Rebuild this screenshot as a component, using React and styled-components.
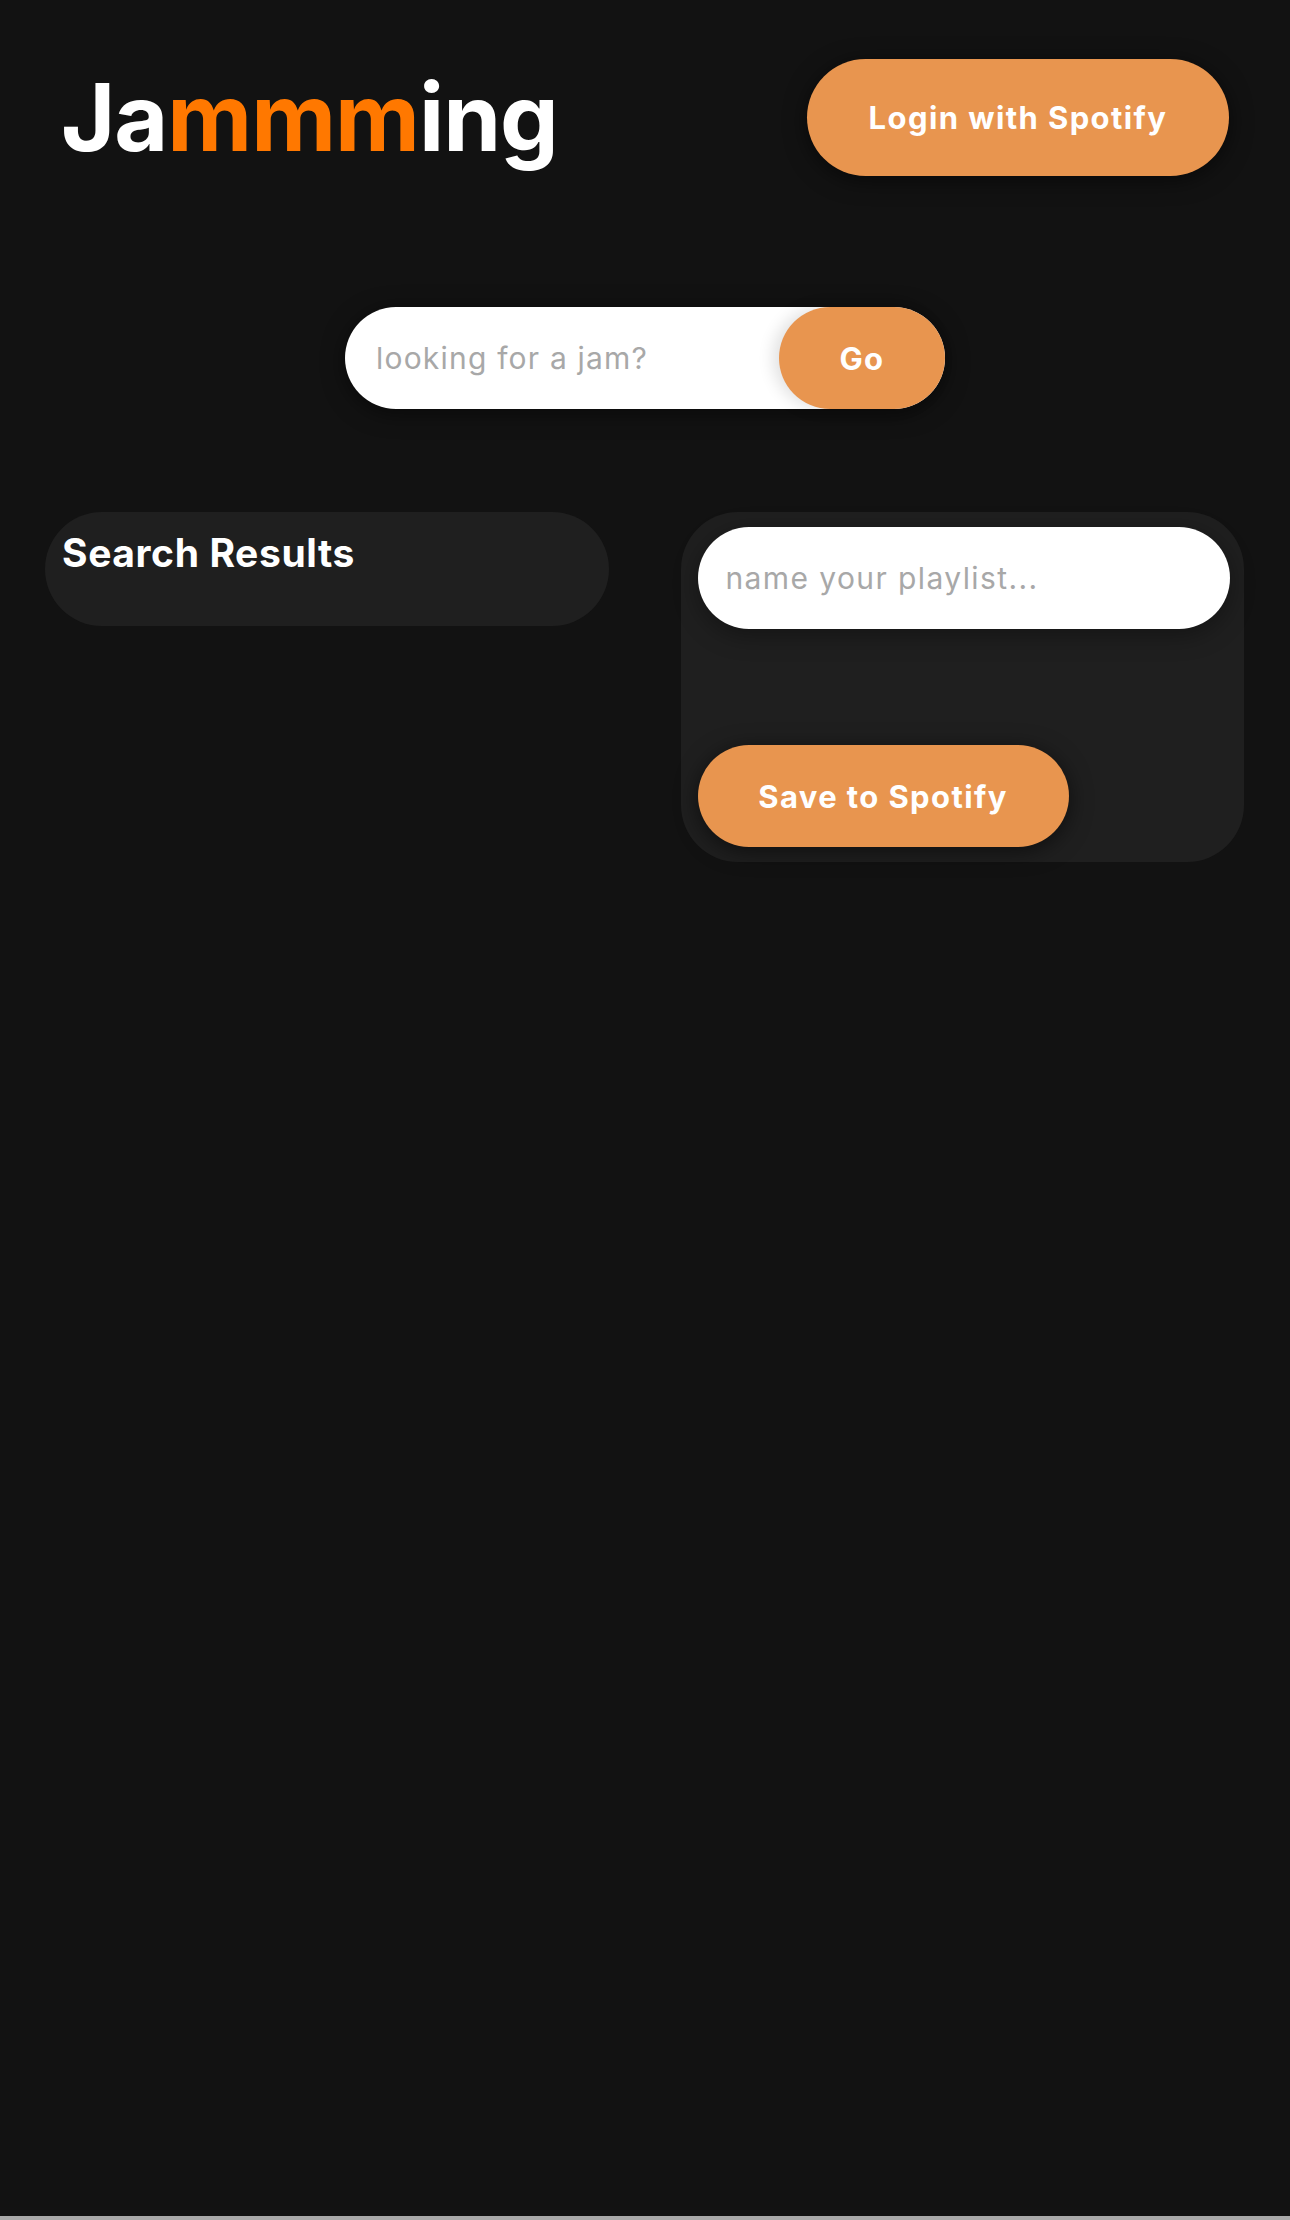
import React from "react";
import styled, { createGlobalStyle } from "styled-components";

const GlobalStyle = createGlobalStyle`
  html, body {
    margin: 0;
    padding: 0;
    background: #121212;
  }
  body {
    font-family: Inter, "Noto Sans", "Liberation Sans", sans-serif;
    color: #ffffff;
  }
  * {
    box-sizing: border-box;
  }
`;

const Page = styled.div`
  display: flex;
  flex-direction: column;
  min-height: 100vh;
  background: #121212;
`;

const Main = styled.main`
  flex: 1;
`;

const BottomStrip = styled.div`
  height: 4px;
  background: #a9a9a9;
`;

const Header = styled.header`
  display: flex;
  justify-content: space-between;
  align-items: center;
  padding: 59px 61px 0 61px;
`;

const Logo = styled.h1`
  margin: 0;
  font-size: 93px;
  font-weight: 700;
  letter-spacing: -1px;
  line-height: 1;
  color: #ffffff;
`;

const Accent = styled.span`
  color: #ff7800;
`;

const PillButton = styled.button`
  border: none;
  border-radius: 999px;
  background: #e8954f;
  color: #ffffff;
  font-family: inherit;
  font-weight: 700;
  font-size: ${({ $size }) => $size || 31}px;
  letter-spacing: 1.4px;
  width: ${({ $width }) => $width}px;
  height: ${({ $height }) => $height || 102}px;
  cursor: pointer;
  box-shadow: 0 4px 22px rgba(0, 0, 0, 0.55);
`;

const SearchRow = styled.div`
  display: flex;
  justify-content: center;
  margin-top: 131px;
`;

const SearchForm = styled.form`
  display: flex;
  width: 600px;
  height: 102px;
  background: #ffffff;
  border-radius: 51px;
  box-shadow: 0 4px 22px rgba(0, 0, 0, 0.5);
`;

const SearchInput = styled.input`
  flex: 1;
  min-width: 0;
  border: none;
  outline: none;
  background: transparent;
  padding-left: 31px;
  font-family: inherit;
  font-size: 30px;
  letter-spacing: 1.2px;
  color: #333;
  border-radius: 51px 0 0 51px;

  &::placeholder {
    color: #a8a8a8;
  }
`;

const GoButton = styled(PillButton)`
  box-shadow: -6px 0 16px rgba(0, 0, 0, 0.12);
`;

const Columns = styled.section`
  display: grid;
  grid-template-columns: 1fr 1fr;
  gap: 72px;
  align-items: start;
  margin-top: 103px;
  padding: 0 46px 0 45px;
`;

const Panel = styled.div`
  background: #1f1f1f;
  border-radius: 57px;
  min-height: ${({ $minHeight }) => $minHeight || 0}px;
  padding: ${({ $padding }) => $padding};
  display: flex;
  flex-direction: column;
  align-items: flex-start;
`;

const PanelTitle = styled.h2`
  margin: 0;
  font-size: 39px;
  font-weight: 700;
  letter-spacing: 0.6px;
  color: #ffffff;
`;

const PlaylistInput = styled.input`
  width: 100%;
  height: 102px;
  border: none;
  outline: none;
  border-radius: 51px;
  background: #ffffff;
  padding-left: 28px;
  font-family: inherit;
  font-size: 30px;
  letter-spacing: 1.4px;
  color: #333;
  box-shadow: 0 6px 24px rgba(0, 0, 0, 0.35);

  &::placeholder {
    color: #a8a8a8;
  }
`;

const TrackList = styled.div`
  height: 116px;
`;

export default function App() {
  return (
    <Page>
      <GlobalStyle />
      <Main>
        <Header>
          <Logo>
            Ja<Accent>mmm</Accent>ing
          </Logo>
          <PillButton $width={422} $height={117}>
            Login with Spotify
          </PillButton>
        </Header>

        <SearchRow>
          <SearchForm onSubmit={(e) => e.preventDefault()}>
            <SearchInput placeholder="looking for a jam?" />
            <GoButton $width={166}>Go</GoButton>
          </SearchForm>
        </SearchRow>

        <Columns>
          <Panel $minHeight={114} $padding="17px 17px">
            <PanelTitle>Search Results</PanelTitle>
          </Panel>
          <Panel $padding="15px 14px 15px 17px">
            <PlaylistInput placeholder="name your playlist..." />
            <TrackList />
            <PillButton $width={371}>Save to Spotify</PillButton>
          </Panel>
        </Columns>
      </Main>
      <BottomStrip />
    </Page>
  );
}
